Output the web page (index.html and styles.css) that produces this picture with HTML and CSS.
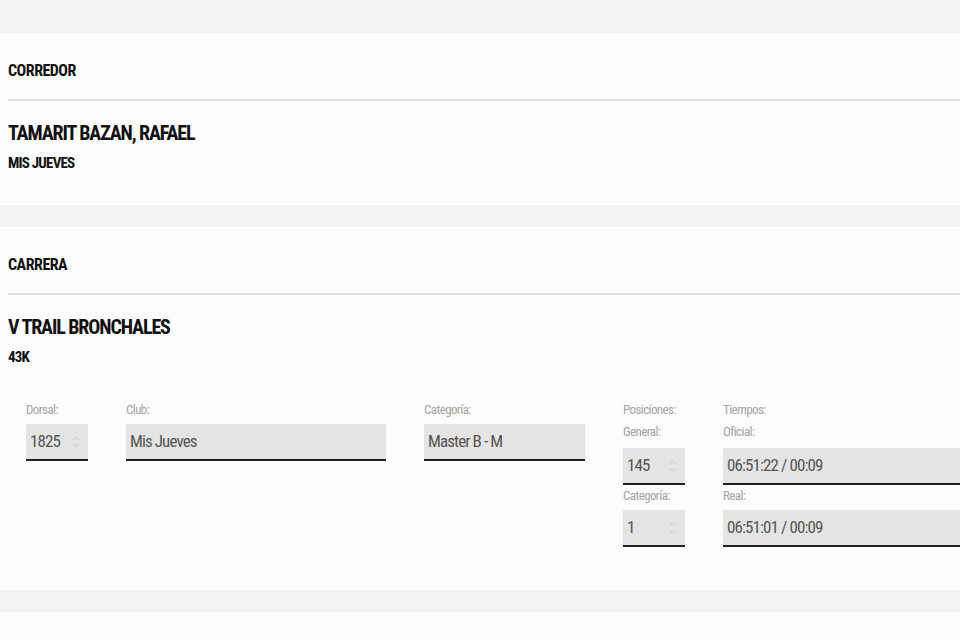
FILE: index.html
```html
<!DOCTYPE html>
<html lang="es">
<head>
<meta charset="utf-8">
<title>Corredor</title>
<link rel="stylesheet" href="styles.css">
</head>
<body>
<section class="card">
  <div class="card-head">CORREDOR</div>
  <div class="card-body">
    <div class="title">TAMARIT BAZAN, RAFAEL</div>
    <div class="subtitle">MIS JUEVES</div>
  </div>
</section>
<section class="card card-race">
  <div class="card-head">CARRERA</div>
  <div class="card-body">
    <div class="title">V TRAIL BRONCHALES</div>
    <div class="subtitle">43K</div>
    <div class="form">
      <div class="field">
        <div class="label">Dorsal:</div>
        <div class="input num"><span>1825</span><svg class="spin" width="9" height="14" viewBox="0 0 9 14"><path d="M1.5 5 L4.5 2 L7.5 5 M1.5 9 L4.5 12 L7.5 9" fill="none" stroke="#c4c4c4" stroke-width="1"/></svg></div>
      </div>
      <div class="field">
        <div class="label">Club:</div>
        <div class="input">Mis Jueves</div>
      </div>
      <div class="field">
        <div class="label">Categoría:</div>
        <div class="input">Master B - M</div>
      </div>
      <div class="field">
        <div class="label">Posiciones:</div>
        <div class="label sub first">General:</div>
        <div class="input num"><span>145</span><svg class="spin" width="9" height="14" viewBox="0 0 9 14"><path d="M1.5 5 L4.5 2 L7.5 5 M1.5 9 L4.5 12 L7.5 9" fill="none" stroke="#c4c4c4" stroke-width="1"/></svg></div>
        <div class="label sub">Categoría:</div>
        <div class="input num"><span>1</span><svg class="spin" width="9" height="14" viewBox="0 0 9 14"><path d="M1.5 5 L4.5 2 L7.5 5 M1.5 9 L4.5 12 L7.5 9" fill="none" stroke="#c4c4c4" stroke-width="1"/></svg></div>
      </div>
      <div class="field">
        <div class="label">Tiempos:</div>
        <div class="label sub first">Oficial:</div>
        <div class="input">06:51:22 / 00:09</div>
        <div class="label sub">Real:</div>
        <div class="input">06:51:01 / 00:09</div>
      </div>
    </div>
  </div>
</section>
<section class="card card-empty"></section>
</body>
</html>
```
FILE: styles.css
```css
html, body {
  margin: 0;
  padding: 0;
}
body {
  background: #f2f2f2;
  padding-top: 33px;
  font-family: "Roboto Condensed", "Liberation Sans", sans-serif;
  color: #111;
  overflow: hidden;
  height: 640px;
  box-sizing: border-box;
}
.card {
  background: #fcfcfc;
  padding-left: 8px;
  margin-bottom: 22px;
}
.card-head {
  padding-top: 30px;
  height: 36px;
  line-height: 16px;
  font-size: 16px;
  letter-spacing: -0.5px;
  font-weight: bold;
  border-bottom: 2px solid #dddddd;
}
.card-body {
  padding-top: 20px;
  padding-bottom: 33px;
}
.card-race .card-body {
  padding-bottom: 43px;
}
.title {
  font-size: 20px;
  line-height: 24px;
  font-weight: bold;
  letter-spacing: -1.1px;
}
.subtitle {
  margin-top: 9px;
  font-size: 15px;
  line-height: 18px;
  font-weight: bold;
  letter-spacing: -0.8px;
}
.form {
  margin-top: 36px;
  margin-left: 18px;
  display: grid;
  grid-template-columns: 62px 260px 161px 62px 1fr;
  column-gap: 38px;
  align-items: start;
}
.label {
  font-size: 13px;
  line-height: 16px;
  color: #a4a4a4;
  letter-spacing: -0.6px;
  margin-bottom: 6px;
}
.label.sub {
  margin-top: 3px;
  margin-bottom: 6px;
}
.label.sub.first {
  margin-top: 0;
  margin-bottom: 8px;
}
.input {
  background: #e4e4e4;
  border-bottom: 2px solid #222;
  height: 35px;
  line-height: 35px;
  padding-left: 4px;
  font-size: 17px;
  letter-spacing: -0.9px;
  color: #555;
  box-sizing: content-box;
}
.input.num {
  display: flex;
  justify-content: space-between;
  align-items: center;
  padding-right: 8px;
}
.spin {
  display: block;
}
.card-empty {
  height: 40px;
  margin-bottom: 0;
}
```
